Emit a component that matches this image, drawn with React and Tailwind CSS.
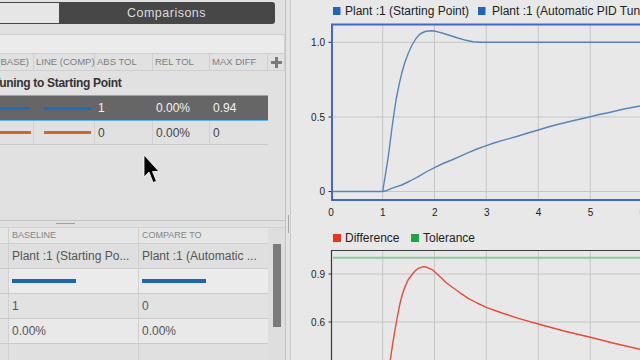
const FONT = { fontFamily: "'Liberation Sans', Arial, sans-serif" };

const fast =
  "331,191.5 382.7,191.5 388.3,156.7 391.7,130 393.5,117 396,100 399,85 401.7,73.3 405,62 408.3,53.3 412,45 416,38.5 420,34 425,31.5 430.7,30.7 436,31.3 442,33 450,35.5 458,38 466,40.3 473,41.7 480,42.3 645,42.3";
const slow =
  "382.7,191.5 386,190.8 391.7,188.3 396,186.8 401.7,185 410,181 418.3,176.7 426,172 435,167.3 443,163.5 451.7,160 460,156.3 468.3,152.7 477,149 486.3,145.7 494,143 501.7,140.7 510,138.3 518.3,136 528,133 538.3,130 548,127 558.3,124.3 574,120.5 590.3,116.7 599,114.5 608.3,112.7 624,109 645,105";
const diff =
  "390,362 392.5,345 395,330 397.5,316 400,303.3 402.5,294 405,286.7 408,280 411.7,275 415,271 418.3,268.3 423.3,266.7 427,267.3 431.7,269.3 436,273 441.7,278.3 446,282.5 451.7,286.7 460,292.8 468.3,298.3 477,303 486.3,307.3 502,313 518.3,318.3 538.3,324 564,331 590.3,337.3 615,343.5 645,350.3";

const xs = [382.7, 434.5, 486.3, 538.3, 590.3];

function Chart1() {
  return (
    <svg width="349" height="226" viewBox="291 0 349 226" className="block" style={FONT}>
      <rect x="333" y="7" width="7.5" height="8" fill="#1f66b5" />
      <text x="345" y="15" fontSize="12" fill="#222">Plant :1 (Starting Point)</text>
      <rect x="478" y="7" width="7.5" height="8" fill="#1f66b5" />
      <text x="492" y="15" fontSize="12" fill="#222">Plant :1 (Automatic PID Tuning to Starting Point)</text>
      {xs.map((x) => (
        <line key={x} x1={x} y1="25" x2={x} y2="199" stroke="#c6c6c6" strokeWidth="1" />
      ))}
      {[42.3, 117, 191.5].map((y) => (
        <line key={y} x1="333" y1={y} x2="645" y2={y} stroke="#c6c6c6" strokeWidth="1" />
      ))}
      <polyline points={slow} fill="none" stroke="#5a83b9" strokeWidth="1.4" strokeLinejoin="round" />
      <polyline points={fast} fill="none" stroke="#5a83b9" strokeWidth="1.4" strokeLinejoin="round" />
      <rect x="332" y="24.5" width="320" height="175.5" fill="none" stroke="#4466c6" strokeWidth="2" />
      {[
        ["1.0", 42.3],
        ["0.5", 117],
        ["0", 191.5],
      ].map(([t, y]) => (
        <g key={t}>
          <line x1="328.5" y1={y} x2="331" y2={y} stroke="#333" strokeWidth="1" />
          <text x="325" y={y + 3.6} fontSize="10" fill="#222" textAnchor="end">{t}</text>
        </g>
      ))}
      {["0", "1", "2", "3", "4", "5", "6"].map((t, i) => (
        <text key={t} x={331 + i * 51.9} y="216" fontSize="10" fill="#222" textAnchor="middle">{t}</text>
      ))}
    </svg>
  );
}

function Chart2() {
  return (
    <svg width="349" height="134" viewBox="291 226 349 134" className="block" style={FONT}>
      <rect x="333" y="234" width="8" height="8" fill="#ee3322" />
      <text x="345" y="242" fontSize="12" fill="#222">Difference</text>
      <rect x="411" y="234" width="8" height="8" fill="#1ea445" />
      <text x="423" y="242" fontSize="12" fill="#222">Tolerance</text>
      {xs.map((x) => (
        <line key={x} x1={x} y1="251" x2={x} y2="360" stroke="#c6c6c6" strokeWidth="1" />
      ))}
      {[274, 322].map((y) => (
        <line key={y} x1="332" y1={y} x2="645" y2={y} stroke="#c6c6c6" strokeWidth="1" />
      ))}
      <line x1="333" y1="257.7" x2="645" y2="257.7" stroke="#8cc89b" strokeWidth="2" />
      <polyline points={diff} fill="none" stroke="#e84a36" strokeWidth="1.4" strokeLinejoin="round" />
      <polyline points="331.5,362 331.5,250.5 645,250.5" fill="none" stroke="#3a3a3a" strokeWidth="1.2" />
      {[
        ["0.9", 274],
        ["0.6", 322],
      ].map(([t, y]) => (
        <g key={t}>
          <line x1="328.5" y1={y} x2="331" y2={y} stroke="#333" strokeWidth="1" />
          <text x="325" y={y + 3.6} fontSize="10" fill="#222" textAnchor="end">{t}</text>
        </g>
      ))}
    </svg>
  );
}

function Plus() {
  return (
    <svg width="11" height="11" viewBox="0 0 11 11">
      <rect x="4" y="0" width="3" height="11" fill="#7a7a7a" />
      <rect x="0" y="4" width="11" height="3" fill="#7a7a7a" />
    </svg>
  );
}

function Cursor() {
  return (
    <svg width="17" height="30" viewBox="0 0 17 30" className="absolute left-[143px] top-[9px]">
      <polygon
        points="1,1 1,23 6,18 10,28.5 13.5,27.3 9.5,17.5 16,17.5"
        fill="#000"
        stroke="#fff"
        strokeWidth="0.8"
        strokeLinejoin="miter"
      />
    </svg>
  );
}

function LeftPanel() {
  const cols = ["w-[34px]", "w-[61px]", "w-[58px]", "w-[57px]", "w-[58px]"];
  return (
    <div className="w-[285px] h-full flex flex-col shrink-0 bg-[#e1e1e1]">
      {/* tabs */}
      <div className="h-[34px] pt-[2px] shrink-0">
        <div className="w-[275px] h-[22px] bg-[#474747] rounded-r-[3px] flex py-[1px] pr-[1px]">
          <div className="w-[59px] bg-[#e6e6e6]" />
          <div className="flex-1 flex items-center justify-center text-[12.5px] text-[#dcdcdc] tracking-[0.5px]">
            Comparisons
          </div>
        </div>
      </div>
      {/* search band */}
      <div className="h-[19px] w-[285px] shrink-0 bg-[#ebebeb] border-t border-r border-[#d2d2d2]" />
      {/* header */}
      <div className="h-[18px] shrink-0 flex border-t border-b border-[#cfcfcf] text-[9.5px] text-[#7d7d7d] leading-none">
        <div className={`${cols[0]} border-r border-[#cfcfcf] flex items-center justify-end pr-[4px] overflow-hidden whitespace-nowrap`}>
          LINE (BASE)
        </div>
        <div className={`${cols[1]} border-r border-[#cfcfcf] flex items-center pl-[2px] whitespace-nowrap`}>LINE (COMP)</div>
        <div className={`${cols[2]} border-r border-[#cfcfcf] flex items-center pl-[2px]`}>ABS TOL</div>
        <div className={`${cols[3]} border-r border-[#cfcfcf] flex items-center pl-[2px]`}>REL TOL</div>
        <div className={`${cols[4]} border-r border-[#cfcfcf] flex items-center pl-[2px]`}>MAX DIFF</div>
        <div className="w-[17px] border-r border-[#cfcfcf] flex items-center justify-center">
          <Plus />
        </div>
      </div>
      {/* group header */}
      <div className="h-[24px] shrink-0 flex items-center overflow-hidden whitespace-nowrap">
        <span className="ml-[-7px] text-[12px] font-bold tracking-[-0.3px] text-[#333]">Tuning to Starting Point</span>
      </div>
      {/* selected row */}
      <div className="w-[268px] h-[26px] shrink-0 flex items-center bg-[#666666] border-y border-[#5cb5ee] text-[12px] text-[#f2f2f2]">
        <div className={`${cols[0]} flex items-center`}>
          <div className="w-[30px] h-[3px] bg-[#1a6cc0]" />
        </div>
        <div className={`${cols[1]} flex items-center pl-[10px]`}>
          <div className="w-[47px] h-[3px] bg-[#1a6cc0]" />
        </div>
        <div className={`${cols[2]} pl-[3px]`}>1</div>
        <div className={`${cols[3]} pl-[3px]`}>0.00%</div>
        <div className={`${cols[4]} pl-[3px]`}>0.94</div>
      </div>
      {/* second row */}
      <div className="w-[268px] h-[24px] shrink-0 flex border-b border-[#c9c9c9] text-[12px] text-[#444]">
        <div className={`${cols[0]} flex items-center border-r border-[#d0d0d0]`}>
          <div className="w-[31px] h-[3px] bg-[#d2642c]" />
        </div>
        <div className={`${cols[1]} flex items-center pl-[10px] border-r border-[#d0d0d0]`}>
          <div className="w-[47px] h-[3px] bg-[#d2642c]" />
        </div>
        <div className={`${cols[2]} flex items-center pl-[3px] border-r border-[#d0d0d0]`}>0</div>
        <div className={`${cols[3]} flex items-center pl-[3px] border-r border-[#d0d0d0]`}>0.00%</div>
        <div className={`${cols[4]} flex items-center pl-[3px]`}>0</div>
      </div>
      {/* empty area */}
      <div className="flex-1 relative">
        <Cursor />
      </div>
      {/* bottom section */}
      <div className="h-[140px] shrink-0 border-t border-[#c4c4c4] flex flex-col">
        <div className="h-[6px] shrink-0 pl-[56px] pt-[2px]">
          <div className="w-[19px] h-[1px] bg-[#a0a0a0]" />
        </div>
        <div className="flex-1 flex border-t border-[#cfcfcf] overflow-hidden">
          <div className="w-[268px] flex flex-col text-[12px] text-[#555]">
            <div className="h-[16px] shrink-0 flex bg-[#e6e6e6] border-b border-[#cfcfcf] text-[9px] text-[#858585] leading-none">
              <div className="w-[9px] border-r border-[#d0d0d0]" />
              <div className="w-[130px] border-r border-[#d0d0d0] flex items-center pl-[3px]">BASELINE</div>
              <div className="w-[129px] flex items-center pl-[3px]">COMPARE TO</div>
            </div>
            <div className="h-[25px] shrink-0 flex bg-[#dfdfdf] border-b border-[#cbcbcb]">
              <div className="w-[9px] border-r border-[#d0d0d0]" />
              <div className="w-[130px] border-r border-[#d0d0d0] flex items-center pl-[3px] whitespace-nowrap overflow-hidden">
                Plant :1 (Starting Po...
              </div>
              <div className="w-[129px] flex items-center pl-[3px] whitespace-nowrap overflow-hidden">
                Plant :1 (Automatic ...
              </div>
            </div>
            <div className="h-[25px] shrink-0 flex bg-[#ebebeb] border-b border-[#cbcbcb]">
              <div className="w-[9px] border-r border-[#d0d0d0] bg-[#e2e2e2]" />
              <div className="w-[130px] border-r border-[#d0d0d0] flex items-center pl-[3px]">
                <div className="w-[64px] h-[4px] bg-[#1f66b0]" />
              </div>
              <div className="w-[129px] flex items-center pl-[3px]">
                <div className="w-[64px] h-[4px] bg-[#1f66b0]" />
              </div>
            </div>
            <div className="h-[25px] shrink-0 flex bg-[#e2e2e2] border-b border-[#cbcbcb]">
              <div className="w-[9px] border-r border-[#d0d0d0]" />
              <div className="w-[130px] border-r border-[#d0d0d0] flex items-center pl-[3px]">1</div>
              <div className="w-[129px] flex items-center pl-[3px]">0</div>
            </div>
            <div className="h-[25px] shrink-0 flex bg-[#e9e9e9] border-b border-[#cbcbcb]">
              <div className="w-[9px] border-r border-[#d0d0d0] bg-[#e2e2e2]" />
              <div className="w-[130px] border-r border-[#d0d0d0] flex items-center pl-[3px]">0.00%</div>
              <div className="w-[129px] flex items-center pl-[3px]">0.00%</div>
            </div>
            <div className="flex-1 flex bg-[#e0e0e0]">
              <div className="w-[9px] border-r border-[#d0d0d0]" />
              <div className="w-[130px] border-r border-[#d0d0d0]" />
              <div className="w-[129px]" />
            </div>
          </div>
          <div className="w-[17px] bg-[#dedede] pt-[16px] pl-[5px]">
            <div className="w-[8px] h-[83px] bg-[#7a7a7a]" />
          </div>
        </div>
      </div>
    </div>
  );
}

export default function App() {
  return (
    <div className="w-[640px] h-[360px] flex overflow-hidden bg-[#e1e1e1] font-['Liberation_Sans',Arial,sans-serif]">
      <LeftPanel />
      <div className="w-[6px] h-full shrink-0 border-l border-[#c2c2c2] border-r border-r-[#cacaca] bg-[#e3e3e3] flex flex-col">
        <div className="h-[215px]" />
        <div className="ml-[2px] w-[1px] h-[18px] bg-[#a8a8a8]" />
      </div>
      <div className="flex-1 h-full bg-[#e8e8e8] flex flex-col overflow-hidden">
        <Chart1 />
        <Chart2 />
      </div>
    </div>
  );
}
